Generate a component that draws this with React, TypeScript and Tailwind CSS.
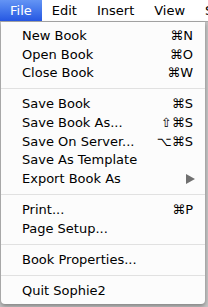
import type { ReactNode } from 'react';

type Item =
    | { kind: 'item'; label: string; shortcut?: ReactNode; submenu?: boolean }
    | { kind: 'sep' };

const items: Item[] = [
    { kind: 'item', label: 'New Book', shortcut: '⌘N' },
    { kind: 'item', label: 'Open Book', shortcut: '⌘O' },
    { kind: 'item', label: 'Close Book', shortcut: '⌘W' },
    { kind: 'sep' },
    { kind: 'item', label: 'Save Book', shortcut: '⌘S' },
    { kind: 'item', label: 'Save Book As...', shortcut: '⇧⌘S' },
    { kind: 'item', label: 'Save On Server...', shortcut: '⌥⌘S' },
    { kind: 'item', label: 'Save As Template' },
    { kind: 'item', label: 'Export Book As', submenu: true },
    { kind: 'sep' },
    { kind: 'item', label: 'Print...', shortcut: '⌘P' },
    { kind: 'item', label: 'Page Setup...' },
    { kind: 'sep' },
    { kind: 'item', label: 'Book Properties...' },
    { kind: 'sep' },
    { kind: 'item', label: 'Quit Sophie2' },
];

const menus = ['Edit', 'Insert', 'View', 'Sophie2'];

export default function App() {
    return (
        <div
            className="h-[307px] w-[208px] overflow-hidden bg-[#c4c4c4] text-[13px] text-black"
            style={{ fontFamily: '"DejaVu Sans", "Liberation Sans", sans-serif' }}
        >
            <div className="flex h-[22px] items-stretch whitespace-nowrap border-b border-[#a9a9a9] bg-white">
                <div className="flex h-[21px] items-center bg-gradient-to-b from-[#6494f4] to-[#2656e2] px-[10px] text-white">
                    File
                </div>
                {menus.map((m) => (
                    <div key={m} className="flex h-[21px] items-center px-[10px]">
                        {m}
                    </div>
                ))}
            </div>

            <div className="ml-[1px] w-[204px] rounded-b-[4px] bg-[#fcfcfc] pb-[4px] pt-[4px] shadow-[0_2px_4px_rgba(0,0,0,0.35)]">
                {items.map((item, i) =>
                    item.kind === 'sep' ? (
                        <div key={i} className="flex h-[12.5px] items-center">
                            <div className="h-px w-full bg-[#e1e1e1]" />
                        </div>
                    ) : (
                        <div
                            key={i}
                            className="flex h-[18.7px] items-center justify-between whitespace-nowrap pl-[21px] pr-[12px] leading-none"
                        >
                            <span>{item.label}</span>
                            {item.shortcut && <span>{item.shortcut}</span>}
                            {item.submenu && (
                                <svg width="9" height="10" viewBox="0 0 9 10" className="mr-[-2px]">
                                    <path d="M0 0 L9 5 L0 10 Z" fill="#707070" />
                                </svg>
                            )}
                        </div>
                    ),
                )}
            </div>
        </div>
    );
}
